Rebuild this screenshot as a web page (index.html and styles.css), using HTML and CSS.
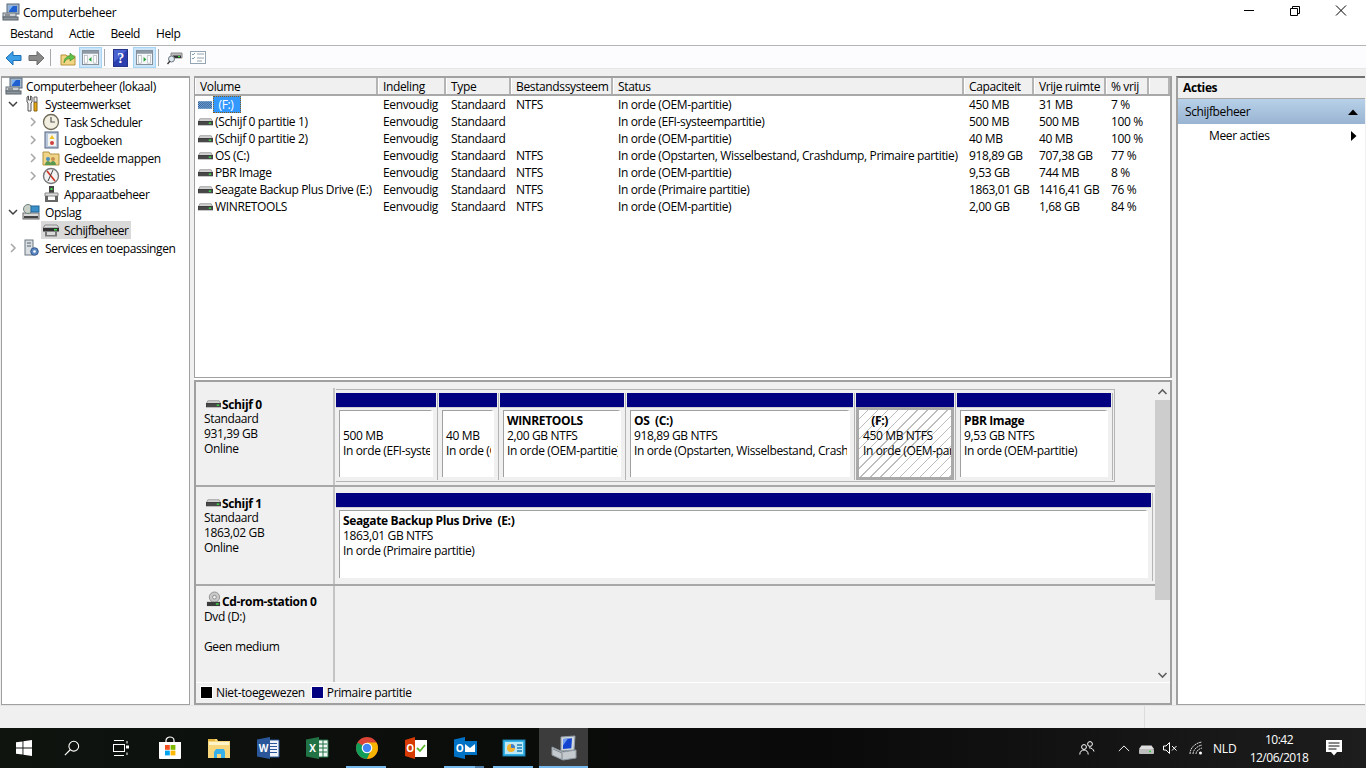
FILE: index.html
```html
<!DOCTYPE html>
<html lang="nl">
<head>
<meta charset="utf-8">
<title>Computerbeheer</title>
<link rel="stylesheet" href="styles.css">
</head>
<body>
<svg class="defs" width="0" height="0" aria-hidden="true">
  <defs>
    <symbol id="i-comp" viewBox="0 0 18 18">
      <rect x="5" y="1" width="12" height="10" fill="#9fb4c8" stroke="#5a6b80"/>
      <rect x="7" y="3" width="8" height="6" fill="#1f5fd0"/>
      <path d="M7 3h4L7 8z" fill="#7fb2f0"/>
      <rect x="1" y="10" width="13" height="4" fill="#c9ced2" stroke="#68717a"/>
      <rect x="1" y="14" width="15" height="3" fill="#8f979e" stroke="#59626a"/>
      <rect x="3" y="11.5" width="5" height="1" fill="#555"/>
    </symbol>
    <symbol id="i-disk" viewBox="0 0 16 10">
      <path d="M2 1.500h12l1.500 3h-15z" fill="#d2d2d2" stroke="#a0a0a0"/>
      <rect x=".5" y="4.500" width="15" height="3.500" fill="#484848" stroke="#3a3a3a"/>
      <rect x="11.500" y="5.500" width="2.500" height="1.500" fill="#38e04a"/>
    </symbol>
    <symbol id="i-tree-disk" viewBox="0 0 18 16">
      <path d="M3 3h12l2 3H1z" fill="#dcdcdc" stroke="#8c8c8c"/>
      <rect x="1" y="6" width="16" height="3.500" fill="#333"/>
      <rect x="12" y="7" width="3" height="1.500" fill="#3de04d"/>
      <path d="M3 9.500h2v5H3zM13 9.500h2v5h-2zM3 13h12v1.500H3z" fill="#777"/>
    </symbol>
    <symbol id="i-chev-d" viewBox="0 0 10 10"><path d="M1 3l4 4 4-4" fill="none" stroke="#404040" stroke-width="1.500"/></symbol>
    <symbol id="i-chev-r" viewBox="0 0 10 10"><path d="M3 1l4 4-4 4" fill="none" stroke="#a6a6a6" stroke-width="1.500"/></symbol>
  </defs>
</svg>

<div class="app">
  <header class="titlebar">
    <svg class="title-icon"><use href="#i-comp"/></svg>
    <span class="title-text">Computerbeheer</span>
    <div class="winbtns">
      <svg class="winbtn" viewBox="0 0 46 24"><path d="M18 10.500h10" stroke="#000"/></svg>
      <svg class="winbtn" viewBox="0 0 46 24"><path d="M18.500 8.500h7v7h-7zM20.500 8.500v-2h7v7h-2" fill="none" stroke="#000"/></svg>
      <svg class="winbtn" viewBox="0 0 46 24"><path d="M18 5.500l10 10M28 5.500l-10 10" stroke="#000" fill="none"/></svg>
    </div>
  </header>

  <nav class="menubar">
    <span class="menu-item">Bestand</span>
    <span class="menu-item">Actie</span>
    <span class="menu-item">Beeld</span>
    <span class="menu-item">Help</span>
  </nav>

  <div class="toolbar">
    <svg class="tb tb-arrow" viewBox="0 0 17 16"><path d="M1 8l7-6.500v4h8v5H8V15z" fill="#3d9ee8" stroke="#1c6fb5"/></svg>
    <svg class="tb tb-arrow tb-fwd" viewBox="0 0 17 16"><path d="M16 8L9 1.500v4H1v5h8V15z" fill="#8a8a8a" stroke="#6b6b6b"/></svg>
    <span class="tb-sep"></span>
    <svg class="tb tb-up" viewBox="0 0 16 16"><path d="M1 5h5l1 1h8v9H1z" fill="#f2d582" stroke="#b8923c"/><path d="M4 13c0-5 3-7 6-7V3l5 4.500L10 11V8.500c-3 0-5 2-6 4.500z" fill="#5fc24a" stroke="#3b8a2a" stroke-width=".6"/></svg>
    <span class="tb-toggle">
      <svg viewBox="0 0 18 16" class="tb-pane"><rect x=".5" y=".5" width="17" height="15" fill="#f4f6f8" stroke="#7f8a94"/><rect x="1" y="1" width="16" height="3" fill="#8d99a4"/><rect x="2.500" y="6" width="3" height="8" fill="#fff" stroke="#9aa4ad" stroke-width=".6"/><rect x="12.500" y="6" width="3" height="8" fill="#fff" stroke="#9aa4ad" stroke-width=".6"/><path d="M10 7.500v5L7 10z" fill="#25a33a"/></svg>
    </span>
    <span class="tb-sep tb-sep-b"></span>
    <svg class="tb tb-help" viewBox="0 0 16 19"><rect x=".5" y=".5" width="15" height="18" fill="#2c3fb0" stroke="#1b2a80"/><path d="M1 1h14L1 14z" fill="#4a62d0"/><text x="8" y="15" text-anchor="middle" class="help-q">?</text></svg>
    <span class="tb-toggle tb-toggle-b">
      <svg viewBox="0 0 18 16" class="tb-pane"><rect x=".5" y=".5" width="17" height="15" fill="#f4f6f8" stroke="#7f8a94"/><rect x="1" y="1" width="16" height="3" fill="#8d99a4"/><rect x="2.500" y="6" width="3" height="8" fill="#fff" stroke="#9aa4ad" stroke-width=".6"/><rect x="12.500" y="6" width="3" height="8" fill="#fff" stroke="#9aa4ad" stroke-width=".6"/><path d="M8 7.500v5l3-2.500z" fill="#25a33a"/></svg>
    </span>
    <span class="tb-sep tb-sep-c"></span>
    <svg class="tb tb-conn" viewBox="0 0 16 14"><path d="M4 2h11v5H4z" fill="#bbb" stroke="#8a8a8a"/><rect x="6" y="4.500" width="8" height="2.500" fill="#333"/><rect x="11" y="5" width="2" height="1.200" fill="#3de04d"/><circle cx="4.500" cy="8" r="3" fill="#dfe7ee" stroke="#6b7680"/><path d="M3 10l-2.500 3" stroke="#333" stroke-width="1.300"/></svg>
    <svg class="tb tb-prop" viewBox="0 0 16 13"><rect x=".5" y=".5" width="15" height="12" fill="#fff" stroke="#93a4b2"/><path d="M2 3l1 1 2-2M2 7l1 1 2-2" stroke="#7fa0b8" fill="none"/><path d="M7 3h7M7 7h7M7 10h5" stroke="#93a4b2"/></svg>
  </div>

  <main class="workspace">
    <aside class="tree">
      <div class="node lvl0"><svg class="node-icon"><use href="#i-comp"/></svg><span>Computerbeheer (lokaal)</span></div>
      <div class="node lvl1"><svg class="chev"><use href="#i-chev-d"/></svg>
        <svg class="node-icon" viewBox="0 0 18 18"><path d="M5 2v5l1 1v8h3V8l1-1V2L8.500 1v4h-2V1z" fill="#f3f3f3" stroke="#555"/><path d="M12 7h3v9h-3z" fill="#e8a814" stroke="#8a6508"/><path d="M12 2h3v5h-3z" fill="#eee" stroke="#666"/></svg><span>Systeemwerkset</span></div>
      <div class="node lvl2"><svg class="chev"><use href="#i-chev-r"/></svg>
        <svg class="node-icon" viewBox="0 0 18 18"><circle cx="9" cy="9" r="7.500" fill="#f3efe0" stroke="#6f6a58" stroke-width="1.300"/><path d="M9 4v5h4" fill="none" stroke="#555" stroke-width="1.200"/></svg><span>Task Scheduler</span></div>
      <div class="node lvl2"><svg class="chev"><use href="#i-chev-r"/></svg>
        <svg class="node-icon" viewBox="0 0 18 18"><rect x="3" y="1" width="13" height="16" fill="#b9c8dc" stroke="#54657e"/><rect x="6" y="3" width="8" height="12" fill="#f5f5f0"/><path d="M10 4l2.500 4h-5z" fill="#f0c020"/><circle cx="10" cy="12" r="2" fill="#d04040"/></svg><span>Logboeken</span></div>
      <div class="node lvl2"><svg class="chev"><use href="#i-chev-r"/></svg>
        <svg class="node-icon" viewBox="0 0 18 18"><path d="M1 3h6l1 2h9v11H1z" fill="#f0d488" stroke="#b0913e"/><circle cx="6" cy="10" r="2" fill="#4a8fc0"/><circle cx="11" cy="10" r="2" fill="#c89050"/><path d="M3 16c0-3 2-4 3-4s3 1 3 4zM8 16c0-3 2-4 3-4s3 1 3 4z" fill="#5a9a50"/></svg><span>Gedeelde mappen</span></div>
      <div class="node lvl2"><svg class="chev"><use href="#i-chev-r"/></svg>
        <svg class="node-icon" viewBox="0 0 18 18"><circle cx="9" cy="9" r="7.500" fill="#f2f2f2" stroke="#777" stroke-width="1.400"/><path d="M5 4l8 10" stroke="#d03020" stroke-width="1.600"/><path d="M11 3l-5 11" stroke="#444"/></svg><span>Prestaties</span></div>
      <div class="node lvl2"><span class="chev-space"></span>
        <svg class="node-icon" viewBox="0 0 18 18"><rect x="7" y="1" width="5" height="7" fill="#444"/><rect x="8.500" y="3" width="2" height="2" fill="#3de04d"/><path d="M3 8h13v3H3z" fill="#ddd" stroke="#888"/><path d="M3 11h3v6H3zM13 11h3v6h-3zM3 15h13v2H3z" fill="#666"/></svg><span>Apparaatbeheer</span></div>
      <div class="node lvl1"><svg class="chev"><use href="#i-chev-d"/></svg>
        <svg class="node-icon" viewBox="0 0 18 18"><rect x="1" y="10" width="16" height="6" fill="#d8d8d8" stroke="#6a6a6a"/><rect x="2" y="13" width="14" height="2.200" fill="#444"/><circle cx="6" cy="6" r="4.500" fill="#c8d0c8" stroke="#70807a"/><rect x="9" y="3" width="8" height="6" fill="#3a8fc8" stroke="#1f6798"/></svg><span>Opslag</span></div>
      <div class="node lvl2"><span class="chev-space"></span>
        <span class="node-sel"><svg class="node-icon"><use href="#i-tree-disk"/></svg><span>Schijfbeheer</span></span></div>
      <div class="node lvl1"><svg class="chev"><use href="#i-chev-r"/></svg>
        <svg class="node-icon" viewBox="0 0 18 18"><rect x="3" y="1" width="8" height="15" fill="#d9dee3" stroke="#6b7680"/><path d="M5 4h4M5 7h4" stroke="#55606a"/><circle cx="12.500" cy="12.500" r="3.800" fill="#5b87c0" stroke="#34598f"/><circle cx="12.500" cy="12.500" r="1.300" fill="#fff"/></svg><span>Services en toepassingen</span></div>
    </aside>

    <section class="center">
      <div class="list-pane">
        <div class="row head">
          <span class="cell">Volume</span><span class="cell">Indeling</span><span class="cell">Type</span><span class="cell">Bestandssysteem</span><span class="cell">Status</span><span class="cell">Capaciteit</span><span class="cell">Vrije ruimte</span><span class="cell">% vrij</span><span class="cell"></span>
        </div>
        <div class="row">
          <span class="cell vol"><svg class="vol-icon" viewBox="0 0 16 10"><defs><pattern id="hatch" width="2" height="2" patternUnits="userSpaceOnUse"><rect width="1" height="1" fill="#1d4f90"/><rect x="1" y="1" width="1" height="1" fill="#1d4f90"/></pattern></defs><rect y="1" width="15" height="8" fill="#8fb8e0"/><rect y="1" width="15" height="8" fill="url(#hatch)"/></svg><span class="vol-sel">&nbsp;&nbsp;(F:)</span></span>
          <span class="cell">Eenvoudig</span><span class="cell">Standaard</span><span class="cell">NTFS</span><span class="cell">In orde (OEM-partitie)</span><span class="cell">450 MB</span><span class="cell">31 MB</span><span class="cell">7 %</span><span class="cell"></span>
        </div>
        <div class="row">
          <span class="cell vol"><svg class="vol-icon"><use href="#i-disk"/></svg>(Schijf 0 partitie 1)</span>
          <span class="cell">Eenvoudig</span><span class="cell">Standaard</span><span class="cell"></span><span class="cell">In orde (EFI-systeempartitie)</span><span class="cell">500 MB</span><span class="cell">500 MB</span><span class="cell">100 %</span><span class="cell"></span>
        </div>
        <div class="row">
          <span class="cell vol"><svg class="vol-icon"><use href="#i-disk"/></svg>(Schijf 0 partitie 2)</span>
          <span class="cell">Eenvoudig</span><span class="cell">Standaard</span><span class="cell"></span><span class="cell">In orde (OEM-partitie)</span><span class="cell">40 MB</span><span class="cell">40 MB</span><span class="cell">100 %</span><span class="cell"></span>
        </div>
        <div class="row">
          <span class="cell vol"><svg class="vol-icon"><use href="#i-disk"/></svg>OS (C:)</span>
          <span class="cell">Eenvoudig</span><span class="cell">Standaard</span><span class="cell">NTFS</span><span class="cell">In orde (Opstarten, Wisselbestand, Crashdump, Primaire partitie)</span><span class="cell">918,89 GB</span><span class="cell">707,38 GB</span><span class="cell">77 %</span><span class="cell"></span>
        </div>
        <div class="row">
          <span class="cell vol"><svg class="vol-icon"><use href="#i-disk"/></svg>PBR Image</span>
          <span class="cell">Eenvoudig</span><span class="cell">Standaard</span><span class="cell">NTFS</span><span class="cell">In orde (OEM-partitie)</span><span class="cell">9,53 GB</span><span class="cell">744 MB</span><span class="cell">8 %</span><span class="cell"></span>
        </div>
        <div class="row">
          <span class="cell vol"><svg class="vol-icon"><use href="#i-disk"/></svg>Seagate Backup Plus Drive (E:)</span>
          <span class="cell">Eenvoudig</span><span class="cell">Standaard</span><span class="cell">NTFS</span><span class="cell">In orde (Primaire partitie)</span><span class="cell">1863,01 GB</span><span class="cell">1416,41 GB</span><span class="cell">76 %</span><span class="cell"></span>
        </div>
        <div class="row">
          <span class="cell vol"><svg class="vol-icon"><use href="#i-disk"/></svg>WINRETOOLS</span>
          <span class="cell">Eenvoudig</span><span class="cell">Standaard</span><span class="cell">NTFS</span><span class="cell">In orde (OEM-partitie)</span><span class="cell">2,00 GB</span><span class="cell">1,68 GB</span><span class="cell">84 %</span><span class="cell"></span>
        </div>
      </div>

      <div class="disk-pane">
        <div class="disk-scroll">
          <div class="disks">
            <div class="disk">
              <div class="disk-info">
                <div class="disk-name"><svg class="disk-icon"><use href="#i-disk"/></svg>Schijf 0</div>
                <div>Standaard</div><div>931,39 GB</div><div>Online</div>
              </div>
              <div class="disk-map">
                <div class="part-row part-row-boxed">
                  <div class="part w100"><div class="part-head"></div><div class="part-body"><div class="part-in"><div class="pl">&nbsp;</div><div class="pl">500 MB</div><div class="pl">In orde (EFI-systeempartitie)</div></div></div></div>
                  <div class="part w58"><div class="part-head"></div><div class="part-body"><div class="part-in"><div class="pl">&nbsp;</div><div class="pl">40 MB</div><div class="pl">In orde (OEM-partitie)</div></div></div></div>
                  <div class="part w124"><div class="part-head"></div><div class="part-body"><div class="part-in"><div class="pl pb">WINRETOOLS</div><div class="pl">2,00 GB NTFS</div><div class="pl">In orde (OEM-partitie)</div></div></div></div>
                  <div class="part w226"><div class="part-head"></div><div class="part-body"><div class="part-in"><div class="pl pb">OS&nbsp; (C:)</div><div class="pl">918,89 GB NTFS</div><div class="pl">In orde (Opstarten, Wisselbestand, Crashdump, Primaire partitie)</div></div></div></div>
                  <div class="part w98 part-sel"><div class="part-head"></div><div class="part-body"><div class="part-in"><div class="pl pb">&nbsp;&nbsp; (F:)</div><div class="pl">450 MB NTFS</div><div class="pl">In orde (OEM-partitie)</div></div></div></div>
                  <div class="part w154"><div class="part-head"></div><div class="part-body"><div class="part-in"><div class="pl pb">PBR Image</div><div class="pl">9,53 GB NTFS</div><div class="pl">In orde (OEM-partitie)</div></div></div></div>
                </div>
              </div>
            </div>
            <div class="disk">
              <div class="disk-info">
                <div class="disk-name"><svg class="disk-icon"><use href="#i-disk"/></svg>Schijf 1</div>
                <div>Standaard</div><div>1863,02 GB</div><div>Online</div>
              </div>
              <div class="disk-map">
                <div class="part-row">
                  <div class="part part-full"><div class="part-head"></div><div class="part-body"><div class="part-in"><div class="pl pb">Seagate Backup Plus Drive&nbsp; (E:)</div><div class="pl">1863,01 GB NTFS</div><div class="pl">In orde (Primaire partitie)</div></div></div></div>
                </div>
              </div>
            </div>
            <div class="disk disk-last">
              <div class="disk-info">
                <div class="disk-name"><svg class="disk-icon disk-icon-cd" viewBox="0 0 16 17"><circle cx="9" cy="6" r="5.500" fill="#c9c9c9" stroke="#8f8f8f"/><circle cx="9" cy="6" r="2" fill="#f2f2f2" stroke="#888"/><rect x="1" y="11" width="14" height="4.500" fill="#3c3c3c"/><rect x="10.500" y="12.500" width="3" height="1.500" fill="#3de04d"/></svg>Cd-rom-station 0</div>
                <div class="disk-gap">Dvd (D:)</div><div>&nbsp;</div><div>Geen medium</div>
              </div>
              <div class="disk-map"></div>
            </div>
          </div>
          <div class="scrollbar">
            <svg class="sb-arrow" viewBox="0 0 15 12"><path d="M3.500 6L7.500 2l4 4" fill="none" stroke="#606060" stroke-width="1.600"/></svg>
            <div class="sb-track"><div class="sb-thumb"></div></div>
            <svg class="sb-arrow" viewBox="0 0 15 12"><path d="M3.500 3l4 4 4-4" fill="none" stroke="#606060" stroke-width="1.600"/></svg>
          </div>
        </div>
        <div class="legend">
          <span class="swatch swatch-black"></span><span class="legend-label">Niet-toegewezen</span>
          <span class="swatch swatch-navy"></span><span>Primaire partitie</span>
        </div>
      </div>
    </section>

    <aside class="actions">
      <div class="actions-title">Acties</div>
      <div class="actions-group"><span>Schijfbeheer</span><svg class="caret-up" viewBox="0 0 10 6"><path d="M0 6l5-5.500L10 6z" fill="#000"/></svg></div>
      <div class="actions-item"><span>Meer acties</span><svg class="caret-right" viewBox="0 0 6 10"><path d="M0 0l5.500 5L0 10z" fill="#000"/></svg></div>
    </aside>
  </main>

  <footer class="statusbar"><span class="status-a"></span><span class="status-b"></span></footer>

  <div class="taskbar">
    <div class="tk-cell tk-start"><svg viewBox="0 0 16 16" class="tk-16"><path d="M0 2.300L6.500 1.400v6.200H0zM7.400 1.300L16 0v7.600H7.400zM0 8.400h6.500v6.200L0 13.700zM7.400 8.400H16V16l-8.600-1.200z" fill="#fff"/></svg></div>
    <div class="tk-cell tk-search"><svg viewBox="0 0 18 18" class="tk-18"><circle cx="11" cy="7" r="5.500" fill="none" stroke="#fff" stroke-width="1.200"/><path d="M7 11l-6 6" stroke="#fff" stroke-width="1.300"/></svg></div>
    <div class="tk-cell tk-view"><svg viewBox="0 0 18 16" class="tk-18"><path d="M2 .5h10M2 15.500h10" stroke="#fff"/><rect x="1.500" y="4.500" width="11" height="7" fill="none" stroke="#fff"/><path d="M15 1v2.500M15 12.500V15" stroke="#fff"/><rect x="14" y="5.500" width="3" height="3" fill="#fff"/></svg></div>
    <div class="tk-cell tk-store"><svg viewBox="0 0 24 24" class="tk-24"><path d="M8 7V4.500C8 2.500 10 1 12 1s4 1.500 4 3.500V7" fill="none" stroke="#fff" stroke-width="1.200"/><path d="M1 6h22v16a1 1 0 0 1-1 1H2a1 1 0 0 1-1-1z" fill="#fff"/><rect x="7" y="9" width="4.800" height="4.800" fill="#f25022"/><rect x="12.600" y="9" width="4.800" height="4.800" fill="#7fba00"/><rect x="7" y="14.600" width="4.800" height="4.800" fill="#00a4ef"/><rect x="12.600" y="14.600" width="4.800" height="4.800" fill="#ffb900"/></svg></div>
    <div class="tk-cell"><svg viewBox="0 0 22 20" class="tk-22"><path d="M0 1h9l1 2h12v17H0z" fill="#f7d67c"/><path d="M0 1h7v2H0z" fill="#e2b440"/><path d="M1 4h20v3H1z" fill="#fff3c8"/><path d="M6 20v-6l2-3h8l1 3v6h-4v-4H9v4z" fill="#37b0ea"/></svg></div>
    <div class="tk-cell"><svg viewBox="0 0 24 24" class="tk-24"><path d="M8 4h15v17H8z" fill="#f0f4fa" stroke="#2b579a"/><path d="M14 7.500h7M14 10.500h7M14 13.500h7M14 16.500h7" stroke="#2b579a"/><path d="M1 3.500L14 1v22L1 20.500z" fill="#2b579a"/><text x="7.300" y="16" text-anchor="middle" class="tk-letter">W</text></svg></div>
    <div class="tk-cell"><svg viewBox="0 0 24 24" class="tk-24"><path d="M8 4h15v17H8z" fill="#f0f7f3" stroke="#217346"/><path d="M14 8h8M14 12h8M14 16h8M18 4v17" stroke="#217346"/><path d="M1 3.500L14 1v22L1 20.500z" fill="#217346"/><text x="7.300" y="16" text-anchor="middle" class="tk-letter">X</text></svg></div>
    <div class="tk-cell tk-running tk-chrome"><svg viewBox="0 0 24 24" class="tk-24"><circle cx="12" cy="12" r="11" fill="#db4437"/><path d="M12 12L2.500 6.500A11 11 0 0 0 12 23l5-11z" fill="#0f9d58"/><path d="M12 12l5 0L12 23A11 11 0 0 0 21.500 6.500H12z" fill="#f4b400"/><circle cx="12" cy="12" r="5.300" fill="#fff"/><circle cx="12" cy="12" r="4.200" fill="#4285f4"/></svg></div>
    <div class="tk-cell tk-office"><svg viewBox="0 0 24 24" class="tk-24"><path d="M9 4h14v17H9z" fill="#fff"/><path d="M13 12l3 3 5-6" fill="none" stroke="#5cb82e" stroke-width="1.800"/><path d="M1 4L11 1v22L1 20z" fill="#d83b01"/><text x="6" y="16" text-anchor="middle" class="tk-letter">O</text></svg></div>
    <div class="tk-cell tk-running tk-outlook"><svg viewBox="0 0 24 24" class="tk-24"><rect x="10" y="5" width="14" height="14" fill="#0072c6"/><path d="M12 8l5 4 5-4v8H12z" fill="#fff"/><path d="M1 3.500L12 1v22L1 20.500z" fill="#0072c6"/><text x="6.500" y="16" text-anchor="middle" class="tk-letter">O</text></svg></div>
    <div class="tk-cell tk-running"><svg viewBox="0 0 24 22" class="tk-24"><rect x="1" y="3" width="22" height="16" fill="#35b4e8" stroke="#1c7fb0"/><rect x="3" y="5" width="18" height="12" fill="#bde6f7"/><circle cx="9" cy="11" r="4" fill="#f5b530"/><path d="M9 11V7a4 4 0 0 1 4 4z" fill="#3a7fd0"/><path d="M15 8h5M15 11h5M15 14h5" stroke="#1c7fb0" stroke-width="1.300"/></svg></div>
    <div class="tk-cell tk-running tk-active"><svg class="tk-28" viewBox="0 0 28 26"><path d="M11 2l14-1-1 14-13 1z" fill="#cfd6dc" stroke="#8f9aa3"/><path d="M13 4l9-.7-.7 10-8.300.7z" fill="#1344d0"/><path d="M13 4l5-.4-5 7z" fill="#6f9cf0"/><path d="M2 12l11 5 13-2v8l-13 2-11-5z" fill="#c3c9cd" stroke="#8f9aa3"/><path d="M3 14l9 4v6" fill="none" stroke="#7e868c"/></svg></div>
    <div class="tray">
      <svg class="tray-people" viewBox="0 0 16 14"><circle cx="5" cy="6" r="2.400" fill="none" stroke="#fff"/><circle cx="11" cy="3" r="2.400" fill="none" stroke="#fff"/><path d="M.8 13.500c0-3 2-4.500 4.200-4.500s4.200 1.500 4.200 4.500M10 6.800c2.500 0 4.500 1.300 5 3.700" fill="none" stroke="#fff"/></svg>
      <svg class="tray-chev" viewBox="0 0 14 8"><path d="M1 7l6-6 6 6" fill="none" stroke="#fff" stroke-width="1.100"/></svg>
      <svg class="tray-drive" viewBox="0 0 15 9"><path d="M2.500.5h10L15 4H0z" fill="#ddd"/><rect y="4" width="15" height="5" rx="1" fill="#bdbdbd"/><rect x="10" y="5.700" width="2" height="1.500" fill="#37d24a"/></svg>
      <svg class="tray-vol" viewBox="0 0 15 12"><path d="M.5 4h2.500L6.500.5v11L3 8H.5z" fill="none" stroke="#fff"/><path d="M9 4l4.500 4.500M13.500 4L9 8.500" stroke="#fff"/></svg>
      <svg class="tray-wifi" viewBox="0 0 14 14"><path d="M1 13C1 7 6 2 13 1M4 13c0-4 4-8 9-9M7 13c0-2 2-5 6-6" fill="none" stroke="#ddd" stroke-dasharray="2 .6"/><circle cx="11.500" cy="12" r="1.500" fill="#fff"/></svg>
      <span class="tray-lang">NLD</span>
      <div class="tray-clock"><div>10:42</div><div>12/06/2018</div></div>
      <svg class="tray-note" viewBox="0 0 16 16"><path d="M0 0h16v12h-5l-3 3.500L5 12H0z" fill="#fff"/><path d="M2.500 3h11M2.500 6h11M2.500 9h8" stroke="#111"/></svg>
    </div>
  </div>
</div>
</body>
</html>
```

FILE: styles.css
```css
* { box-sizing: border-box; }
html, body { margin: 0; padding: 0; height: 100%; overflow: hidden; }
body {
  font-family: "Open Sans", "Noto Sans", "Liberation Sans", sans-serif;
  font-size: 12px;
  letter-spacing: -0.36px;
  color: #000;
  background: #f0f0f0;
}
.defs { position: absolute; }
svg { display: block; flex: none; }

.app { display: flex; flex-direction: column; width: 1366px; height: 768px; }

/* title + menu */
.titlebar { height: 24px; background: #fff; display: flex; align-items: center; padding-left: 2px; }
.title-icon { width: 18px; height: 18px; margin-right: 3px; }
.title-text { font-size: 12px; letter-spacing: -0.2px; }
.winbtns { margin-left: auto; margin-right: 2px; display: flex; }
.winbtn { width: 46px; height: 24px; }
.menubar { height: 22px; background: #fff; border-bottom: 1px solid #b4b4b4; display: flex; align-items: center; padding: 0 0 3px 10px; gap: 16px; }
.menu-item { font-size: 12px; letter-spacing: -0.4px; }

/* toolbar */
.toolbar { height: 23px; background: #fcfcfe; border-bottom: 1px solid #e6e6e6; display: flex; align-items: center; padding: 1px 0 0 5px; }
.tb-arrow { width: 17px; height: 16px; }
.tb-fwd { margin-left: 6px; }
.tb-sep { width: 1px; height: 17px; background: #a8a8a8; margin-left: 5px; }
.tb-up { width: 16px; height: 16px; margin-left: 9px; }
.tb-toggle { width: 23px; height: 21px; margin-left: 3px; background: #cce4f7; border: 1px solid #a6d4f5; display: flex; align-items: center; justify-content: center; }
.tb-pane { width: 17px; height: 15px; }
.tb-sep-b { margin-left: 2px; }
.tb-help { width: 15px; height: 18px; margin-left: 8px; }
.help-q { font: bold 15px "Liberation Serif", serif; fill: #fff; }
.tb-toggle-b { margin-left: 5px; }
.tb-sep-c { margin-left: 2px; }
.tb-conn { width: 16px; height: 14px; margin-left: 8px; }
.tb-prop { width: 16px; height: 13px; margin-left: 7px; }

/* workspace */
.workspace { height: 636px; padding: 7px 0 0 1px; display: flex; gap: 4px; background: #f0f0f0; }
.tree { width: 189px; background: #fff; border-top: 2px solid #a0a0a0; border-left: 1px solid #a0a0a0; border-right: 1px solid #a0a0a0; border-bottom: 1px solid #a0a0a0; }
.node { height: 18px; display: flex; align-items: center; white-space: nowrap; letter-spacing: -0.42px; }
.lvl0 { padding-left: 3px; margin-top: -1px; }
.lvl1 { padding-left: 6px; }
.lvl2 { padding-left: 26px; }
.chev, .chev-space { width: 10px; height: 10px; margin-right: 4px; flex: none; }
.node-icon { width: 18px; height: 18px; margin-right: 4px; flex: none; }
.lvl1 .node-icon { margin-right: 5px; }
.lvl0 .node-icon { margin-right: 3px; }
.node-sel { display: flex; align-items: center; background: #d9d9d9; height: 18px; padding-right: 2px; margin-left: -1px; padding-left: 1px; }

.center { width: 978px; display: flex; flex-direction: column; background: #fff; }
.list-pane { height: 302px; background: #fff; border: 1px solid #a0a0a0; border-top-width: 2px; border-right-width: 2px; }
.row { display: grid; grid-template-columns: 183px 68px 65px 102px 351px 70px 72px 43px 1fr; height: 17px; align-items: center; white-space: nowrap; }
.row .cell { padding-left: 5px; overflow: hidden; }
.row .vol { padding-left: 3px; display: flex; align-items: center; overflow: visible; }
.row.head { height: 18px; background: #f0f0f0; border-bottom: 2px solid #a8a8a8; align-items: stretch; }
.row.head .cell { border-right: 2px solid #b4b4b4; border-left: 1px solid #fff; display: flex; align-items: center; padding-left: 4px; }
.vol-icon { width: 15px; height: 10px; margin-right: 2px; }
.vol-sel { background: #3399ff; color: #fff; height: 17px; line-height: 17px; width: 28px; margin-left: -2px; outline: 1px dotted #8a5a10; outline-offset: -1px; }

.disk-pane { margin-top: 2px; height: 325px; background: #f0f0f0; border-top: 2px solid #a0a0a0; border-left: 2px solid #a0a0a0; border-bottom: 2px solid #a0a0a0; border-right: 2px solid #a0a0a0; padding-top: 6px; display: flex; flex-direction: column; }
.disk-scroll { display: flex; height: 294px; }
.disks { width: 959px; display: flex; flex-direction: column; background: #f0f0f0; }
.disk { height: 99px; display: flex; border-bottom: 2px solid #a8a8a8; }
.disk-last { height: 96px; border-bottom: 0; }
.disk-last .disk-info { padding-top: 8px; }
.disk-info { width: 139px; border-right: 2px solid #c4c4c4; padding: 9px 0 0 8px; line-height: 15px; }
.disk-name { font-weight: 700; display: flex; align-items: center; height: 14px; padding-left: 2px; }
.disk-gap { margin-top: 1px; }
.disk-icon { width: 15px; height: 10px; margin-right: 1px; }
.disk-icon-cd { height: 17px; margin-top: -4px; }
.disk-map { flex: 1; padding: 6px 0 0 1px; }
.part-row { display: flex; gap: 3px; height: 88px; }
.part-row-boxed { width: 779px; height: 93px; margin-top: -5px; border: 1px solid #b4b4b4; border-left: 0; padding: 3px 2px 1px 0; }
.part { display: flex; flex-direction: column; box-shadow: 1px 0 0 #f0f0f0, 2px 0 0 #b4b4b4; }
.w100 { width: 100px; }
.w58 { width: 58px; }
.w124 { width: 124px; }
.w226 { width: 226px; }
.w98 { width: 98px; }
.w154 { width: 154px; }
.part-full { width: 815px; }
.part-head { height: 14px; background: #000080; flex: none; }
.part-body { flex: 1; padding: 2px 3px 3px 3px; border-top: 1px solid #d0d0d0; background: #f0f0f0; min-height: 0; }
.part-in { height: 100%; background: #fff; border-top: 1px solid #a0a0a0; border-left: 1px solid #a0a0a0; border-right: 3px solid #fff; padding: 2px 0 0 3px; line-height: 15px; overflow: hidden; white-space: nowrap; }
.part-sel .part-body { border: 3px solid #a9a9a9; padding: 0; }
.part-sel .part-in { border: 0; padding: 3px 0 0 4px; background: repeating-linear-gradient(135deg, #fff 0, #fff 6px, #bdbdbd 6px, #bdbdbd 7px); }
.pb { font-weight: 700; }

.scrollbar { width: 15px; display: flex; flex-direction: column; background: #f0f0f0; }
.sb-arrow { width: 15px; height: 12px; }
.sb-track { flex: 1; }
.sb-thumb { height: 200px; background: #cdcdcd; }

.legend { height: 20px; border-top: 1px solid #fff; display: flex; align-items: center; padding-left: 4px; }
.swatch { width: 13px; height: 13px; border: 1px solid #fff; margin-right: 3px; }
.swatch-black { background: #000; }
.swatch-navy { background: #000080; }
.legend-label { margin-right: 6px; }

.actions { width: 189px; background: #fff; border-top: 2px solid #707070; border-left: 2px solid #a0a0a0; border-bottom: 1px solid #a0a0a0; }
.actions-title { height: 21px; background: #f0f0f0; border-bottom: 1px solid #a8a8a8; font-weight: 700; padding-left: 5px; line-height: 19px; }
.actions-group { height: 25px; background: linear-gradient(#b8d1e9, #99b4d2); display: flex; align-items: center; padding: 0 7px 0 7px; justify-content: space-between; }
.caret-up { width: 10px; height: 6px; }
.actions-item { height: 23px; display: flex; align-items: center; justify-content: space-between; padding: 0 8px 0 31px; }
.caret-right { width: 6px; height: 10px; }

.statusbar { height: 23px; background: #f0f0f0; border-top: 1px solid #e4e4e4; display: flex; }
.status-a { width: 1145px; border-right: 1px solid #dcdcdc; }
.status-b { flex: 1; }

/* taskbar */
.taskbar { height: 40px; display: flex; background: linear-gradient(90deg, #0f140f 0, #0a0c0a 40%, #0a0a0a 60%, #1d1d1d 100%); color: #fff; }
.tk-cell { width: 49px; height: 40px; display: flex; align-items: center; justify-content: center; position: relative; }
.tk-start { width: 47px; }
.tk-search { width: 50px; }
.tk-view { width: 48px; }
.tk-chrome { margin-left: 1px; }
.tk-16 { width: 16px; height: 16px; }
.tk-18 { width: 18px; height: 16px; }
.tk-22 { width: 22px; height: 20px; }
.tk-24 { width: 24px; height: 24px; }
.tk-28 { width: 28px; height: 26px; }
.tk-letter { font: bold 10px "Open Sans", sans-serif; fill: #fff; }
.tk-running::after { content: ""; position: absolute; left: 4px; right: 5px; bottom: 0; height: 2px; background: #76b9ed; }
.tk-outlook::after { background: linear-gradient(90deg, #76b9ed 77%, #4f7fa8 77%); }
.tk-active { background: #3c3c3c; margin-left: 1px; }
.tk-active::after { left: 0; right: 0; }
.tray { margin-left: auto; display: flex; align-items: center; width: 287px; font-size: 12px; letter-spacing: -0.2px; }
.tray-people { width: 16px; height: 14px; }
.tray-chev { width: 12px; height: 7px; margin-left: 23px; }
.tray-drive { width: 15px; height: 9px; margin-left: 9px; margin-top: 3px; }
.tray-vol { width: 15px; height: 12px; margin-left: 9px; }
.tray-wifi { width: 14px; height: 14px; margin-left: 11px; }
.tray-lang { margin-left: 10px; width: 24px; }
.tray-clock { margin-left: 12px; width: 60px; text-align: center; line-height: 18px; letter-spacing: -0.5px; padding-top: 1px; }
.tray-note { width: 16px; height: 16px; margin-left: 17px; }
```
